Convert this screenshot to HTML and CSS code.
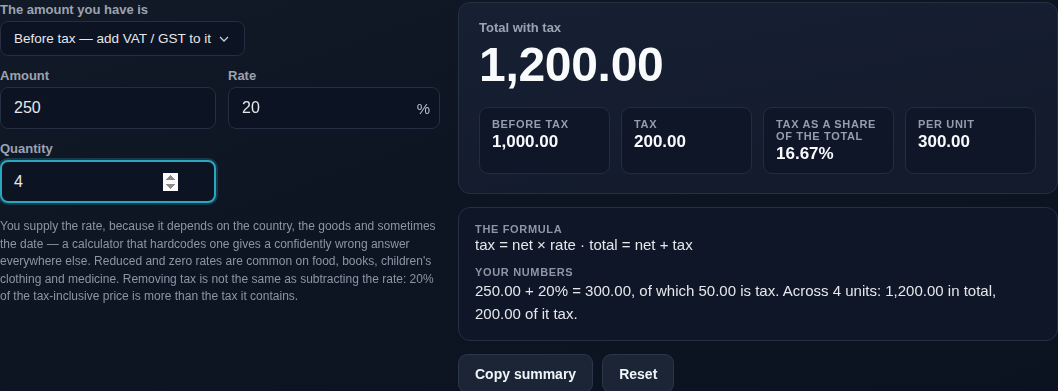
FILE: index.html
```html
<!DOCTYPE html>
<html lang="en">
<head>
    <meta charset="UTF-8">
    <meta name="viewport" content="width=device-width, initial-scale=1.0">
    <title>VAT / GST Calculator</title>
    <link rel="stylesheet" href="styles.css">
</head>
<body>
    <div class="calc">
        <div class="inputs">
            <div class="field">
                <label for="mode">The amount you have is</label>
                <select id="mode" class="select">
                    <option>Before tax — add VAT / GST to it</option>
                    <option>After tax — take VAT / GST out</option>
                </select>
            </div>
            <div class="row">
                <div class="field">
                    <label for="amount">Amount</label>
                    <input type="number" id="amount" class="input" value="250">
                </div>
                <div class="field">
                    <label for="rate">Rate</label>
                    <div class="suffix-wrap">
                        <input type="text" id="rate" class="input" value="20">
                        <span class="suffix">%</span>
                    </div>
                </div>
            </div>
            <div class="row">
                <div class="field">
                    <label for="qty">Quantity</label>
                    <input type="number" id="qty" class="input active" value="4" min="1" autofocus>
                </div>
            </div>
            <p class="note">You supply the rate, because it depends on the country, the goods and sometimes the date — a calculator that hardcodes one gives a confidently wrong answer everywhere else. Reduced and zero rates are common on food, books, children's clothing and medicine. Removing tax is not the same as subtracting the rate: 20% of the tax-inclusive price is more than the tax it contains.</p>
        </div>

        <div class="results">
            <div class="panel total-panel">
                <div class="total-label">Total with tax</div>
                <div class="total" id="total">1,200.00</div>
                <div class="stats">
                    <div class="stat">
                        <div class="stat-label">Before tax</div>
                        <div class="stat-value" id="net">1,000.00</div>
                    </div>
                    <div class="stat">
                        <div class="stat-label">Tax</div>
                        <div class="stat-value" id="tax">200.00</div>
                    </div>
                    <div class="stat">
                        <div class="stat-label">Tax as a share of the total</div>
                        <div class="stat-value" id="share">16.67%</div>
                    </div>
                    <div class="stat">
                        <div class="stat-label">Per unit</div>
                        <div class="stat-value" id="unit">300.00</div>
                    </div>
                </div>
            </div>

            <div class="panel formula-panel">
                <div class="small-head">The formula</div>
                <div class="formula">tax = net × rate · total = net + tax</div>
                <div class="small-head second">Your numbers</div>
                <div class="numbers" id="numbers">250.00 + 20% = 300.00, of which 50.00 is tax. Across 4 units: 1,200.00 in total, 200.00 of it tax.</div>
            </div>

            <div class="buttons">
                <button class="btn">Copy summary</button>
                <button class="btn">Reset</button>
            </div>
        </div>
    </div>
</body>
</html>
```

FILE: styles.css
```css
body {
    margin: 0;
    font-family: "Liberation Sans", Arial, sans-serif;
    background: linear-gradient(160deg, #131a27 0%, #0d1422 45%, #0b1220 100%);
    color: #e5e7eb;
    min-height: 391px;
    overflow: hidden;
}
.calc {
    display: grid;
    grid-template-columns: 442px 1fr;
    gap: 16px;
    padding-top: 2px;
}
.inputs {
    display: flex;
    flex-direction: column;
    gap: 12px;
}
.field {
    display: flex;
    flex-direction: column;
}
.field label {
    font-size: 13px;
    font-weight: bold;
    color: #9ba3b2;
    line-height: 15px;
    margin-bottom: 4px;
}
.row {
    display: grid;
    grid-template-columns: 216px 212px;
    gap: 12px;
}
.select {
    appearance: none;
    -webkit-appearance: none;
    width: 245px;
    height: 35px;
    padding: 0 28px 0 13px;
    font-family: inherit;
    font-size: 13.5px;
    color: #e5e7eb;
    background-color: #0c1322;
    background-image: url("data:image/svg+xml,%3Csvg xmlns='http://www.w3.org/2000/svg' width='10' height='6' viewBox='0 0 10 6'%3E%3Cpath d='M1 1l4 4 4-4' fill='none' stroke='%23c9ced8' stroke-width='1.3'/%3E%3C/svg%3E");
    background-repeat: no-repeat;
    background-position: right 15px center;
    border: 1px solid #252f41;
    border-radius: 8px;
}
.input {
    box-sizing: border-box;
    width: 100%;
    height: 42px;
    padding: 0 13px;
    font-family: inherit;
    font-size: 16px;
    color: #e5e7eb;
    background: #0c1322;
    border: 1px solid #252f41;
    border-radius: 8px;
    outline: none;
}
.input.active {
    height: 43px;
    border: 2px solid #2aa6bd;
    box-shadow: 0 0 0 2px rgba(42, 166, 189, 0.25);
    padding-left: 12px;
    padding-right: 36px;
}
.suffix-wrap {
    position: relative;
}
.suffix {
    position: absolute;
    right: 10px;
    top: 13px;
    font-size: 15px;
    color: #b8bfcc;
}
.note {
    margin: 3px 0 0;
    font-size: 12px;
    line-height: 17.5px;
    color: #8d95a4;
}
.results {
    display: flex;
    flex-direction: column;
    gap: 13px;
}
.panel {
    border: 1px solid #263043;
    border-radius: 12px;
    background: linear-gradient(170deg, #172033 0%, #121a2b 100%);
}
.total-panel {
    padding: 17px 20px 19px 20px;
}
.total-label {
    font-size: 13px;
    font-weight: bold;
    color: #9ba3b2;
}
.total {
    font-size: 48px;
    font-weight: bold;
    letter-spacing: -0.3px;
    color: #f8fafc;
    line-height: 52px;
    margin-top: 4px;
}
.stats {
    display: grid;
    grid-template-columns: repeat(4, 131px);
    gap: 11px;
    margin-top: 16px;
}
.stat {
    box-sizing: border-box;
    height: 67px;
    padding: 10px 12px;
    background: #0f1627;
    border: 1px solid #232d40;
    border-radius: 9px;
}
.stat-label {
    font-size: 11px;
    font-weight: bold;
    text-transform: uppercase;
    letter-spacing: 0.06em;
    line-height: 12px;
    color: #959daf;
}
.stat-value {
    font-size: 17px;
    font-weight: bold;
    color: #f8fafc;
    margin-top: 2px;
}
.formula-panel {
    background: #0f1627;
    padding: 14px 16px 15px;
}
.small-head {
    font-size: 11px;
    font-weight: bold;
    text-transform: uppercase;
    letter-spacing: 0.06em;
    color: #8d95a6;
    line-height: 14px;
}
.small-head.second {
    margin-top: 11px;
}
.formula {
    font-size: 15px;
    line-height: 18px;
    color: #e5e7eb;
}
.numbers {
    font-size: 15px;
    line-height: 23px;
    color: #e5e7eb;
}
.buttons {
    display: flex;
    gap: 9px;
}
.btn {
    height: 39px;
    padding: 0 16px;
    font-family: inherit;
    font-size: 14px;
    font-weight: bold;
    color: #f1f5f9;
    background: #1b2536;
    border: 1px solid #2b3649;
    border-radius: 9px;
}
```
